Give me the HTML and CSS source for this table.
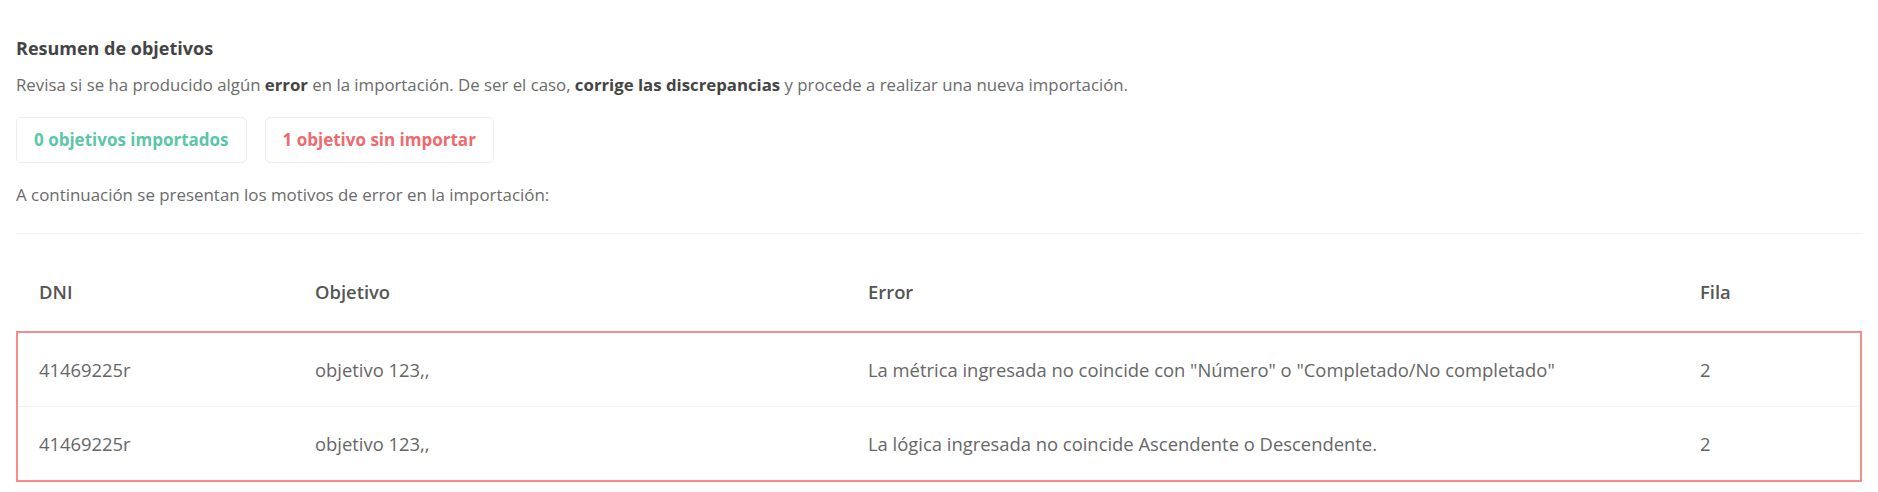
FILE: index.html
```html
<!DOCTYPE html>
<html lang="es">
<head>
    <meta charset="UTF-8">
    <meta name="viewport" content="width=device-width, initial-scale=1.0">
    <title>Resumen de objetivos</title>
    <link rel="stylesheet" href="styles.css">
</head>
<body>
    <div class="page">
        <h2 class="title">Resumen de objetivos</h2>
        <p class="desc">Revisa si se ha producido algún <b>error</b> en la importación. De ser el caso, <b>corrige las discrepancias</b> y procede a realizar una nueva importación.</p>

        <div class="counters">
            <div class="counter ok">0 objetivos importados</div>
            <div class="counter fail">1 objetivo sin importar</div>
        </div>

        <p class="intro">A continuación se presentan los motivos de error en la importación:</p>

        <div class="errors">
            <div class="row head">
                <div class="cell">DNI</div>
                <div class="cell">Objetivo</div>
                <div class="cell">Error</div>
                <div class="cell">Fila</div>
            </div>
            <div class="rows">
                <div class="row">
                    <div class="cell">41469225r</div>
                    <div class="cell">objetivo 123,,</div>
                    <div class="cell">La métrica ingresada no coincide con "Número" o "Completado/No completado"</div>
                    <div class="cell">2</div>
                </div>
                <div class="row">
                    <div class="cell">41469225r</div>
                    <div class="cell">objetivo 123,,</div>
                    <div class="cell">La lógica ingresada no coincide Ascendente o Descendente.</div>
                    <div class="cell">2</div>
                </div>
            </div>
        </div>
    </div>
</body>
</html>
```

FILE: styles.css
```css
body{
    margin: 0;
    background: #fff;
    font-family: "Open Sans", "Noto Sans", sans-serif;
    color: #666;
}
.page{
    padding: 36px 16px 0 16px;
}
.title{
    margin: 0;
    font-size: 18px;
    line-height: 24px;
    font-weight: 700;
    color: #444;
}
.desc{
    margin: 13px 0 0 0;
    font-size: 16.8px;
    line-height: 24px;
    color: #6b6b6b;
}
.desc b{
    color: #444;
}
.counters{
    display: flex;
    gap: 18px;
    margin-top: 20px;
}
.counter{
    height: 44px;
    line-height: 44px;
    padding: 0 17px;
    border: 1px solid #ededed;
    border-radius: 5px;
    font-size: 17px;
    font-weight: 700;
}
.ok{
    color: #5cc6a8;
}
.fail{
    color: #ef6a6d;
}
.intro{
    margin: 20px 0 0 0;
    font-size: 16.9px;
    line-height: 24px;
    color: #6b6b6b;
}
.errors{
    margin-top: 26px;
    border-top: 1px solid #f0f0f0;
}
.row{
    display: grid;
    grid-template-columns: 276px 553px 832px 1fr;
    height: 73px;
    align-items: center;
}
.row.head{
    height: 97px;
    padding: 0 2px;
    align-items: start;
}
.head .cell{
    padding-top: 46px;
    font-weight: 600;
    color: #555;
}
.cell{
    padding-left: 21px;
    font-size: 18.4px;
    line-height: 24px;
}
.rows{
    border: 2px solid #f98b8b;
}
.rows .row + .row{
    border-top: 1px solid #f2f2f2;
}
```
